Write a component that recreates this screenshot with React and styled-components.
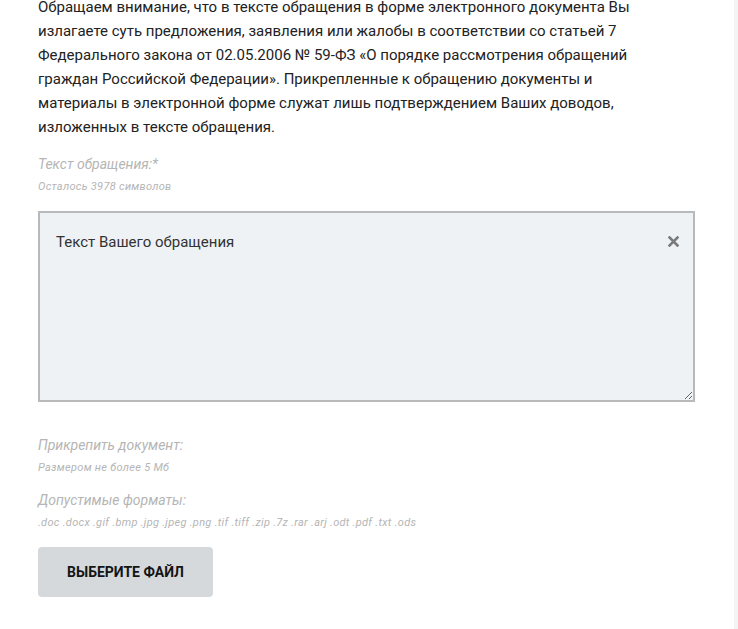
import React from "react";
import styled, { createGlobalStyle } from "styled-components";

const GlobalStyle = createGlobalStyle`
  html, body {
    margin: 0;
    padding: 0;
    background: #ffffff;
  }
  body {
    font-family: Roboto, "Liberation Sans", Arial, sans-serif;
  }
`;

const Page = styled.div`
  width: 738px;
  height: 629px;
  box-sizing: border-box;
  overflow: hidden;
  border-right: 4px solid #f4f4f4;
`;

const Content = styled.div`
  width: 657px;
  padding-left: 38px;
  margin-top: -5px;
`;

const Intro = styled.p`
  margin: 0;
  width: 630px;
  font-size: 15px;
  line-height: 24px;
  color: #222;
`;

const Field = styled.div`
  margin-top: ${(p) => p.$top || 0}px;
`;

const Label = styled.div`
  font-size: 14px;
  line-height: 18px;
  font-style: italic;
  color: #b5b5b5;
`;

const Hint = styled.div`
  margin-top: 7px;
  font-size: 11px;
  line-height: 14px;
  letter-spacing: 0.3px;
  font-style: italic;
  color: #b5b5b5;
`;

const AreaWrap = styled.div`
  position: relative;
  margin-top: 17px;
`;

const TextArea = styled.textarea`
  display: block;
  box-sizing: border-box;
  width: 657px;
  height: 191px;
  margin: 0;
  padding: 18px 40px 17px 16px;
  border: 2px solid #b8b9ba;
  background: #eef2f5;
  font-family: Roboto, "Liberation Sans", Arial, sans-serif;
  font-size: 15px;
  line-height: 22px;
  color: #333;
  resize: vertical;
  outline: none;

  &::placeholder {
    color: #333;
    opacity: 1;
  }
`;

const Clear = styled.button`
  position: absolute;
  top: 24px;
  right: 16px;
  width: 12px;
  height: 12px;
  padding: 0;
  border: none;
  background: transparent;
  cursor: pointer;
  display: flex;
  align-items: center;
  justify-content: center;
`;

const FileButton = styled.button`
  display: flex;
  align-items: center;
  justify-content: center;
  margin-top: 17px;
  width: 175px;
  height: 50px;
  border: none;
  border-radius: 4px;
  background: #d5d9db;
  font-family: Roboto, "Liberation Sans", Arial, sans-serif;
  font-size: 14px;
  font-weight: 700;
  color: #141414;
  text-transform: uppercase;
  cursor: pointer;
`;

export default function App() {
  return (
    <>
      <GlobalStyle />
      <Page>
        <Content>
          <Intro>
            Обращаем внимание, что в тексте обращения в форме электронного
            документа Вы излагаете суть предложения, заявления или жалобы в
            соответствии со статьей 7 Федерального закона от 02.05.2006 № 59-ФЗ
            «О порядке рассмотрения обращений граждан Российской Федерации».
            Прикрепленные к обращению документы и материалы в электронной форме
            служат лишь подтверждением Ваших доводов, изложенных в тексте
            обращения.
          </Intro>

          <Field $top={16}>
            <Label>Текст обращения:*</Label>
            <Hint>Осталось 3978 символов</Hint>
          </Field>

          <AreaWrap>
            <TextArea placeholder="Текст Вашего обращения" />
            <Clear aria-label="Очистить">
              <svg width="11" height="11" viewBox="0 0 11 11">
                <path
                  d="M1.5 1.5 L9.5 9.5 M9.5 1.5 L1.5 9.5"
                  stroke="#7a7a7a"
                  strokeWidth="2.6"
                  strokeLinecap="square"
                />
              </svg>
            </Clear>
          </AreaWrap>

          <Field $top={34}>
            <Label>Прикрепить документ:</Label>
            <Hint>Размером не более 5 Мб</Hint>
          </Field>

          <Field $top={16}>
            <Label>Допустимые форматы:</Label>
            <Hint>
              .doc .docx .gif .bmp .jpg .jpeg .png .tif .tiff .zip .7z .rar .arj
              .odt .pdf .txt .ods
            </Hint>
          </Field>

          <FileButton>Выберите файл</FileButton>
        </Content>
      </Page>
    </>
  );
}
